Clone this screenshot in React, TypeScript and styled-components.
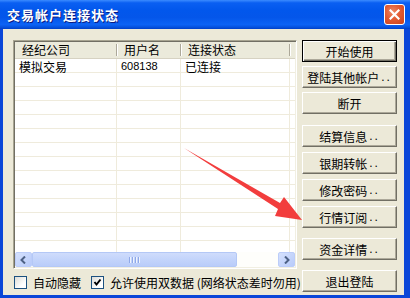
import { FC } from 'react';
import styled, { createGlobalStyle } from 'styled-components';

const GlobalStyle = createGlobalStyle`
  html, body { margin: 0; padding: 0; }
  body {
    width: 410px;
    height: 298px;
    overflow: hidden;
    font-family: "Liberation Sans", "Noto Sans CJK SC", sans-serif;
    font-size: 12px;
    color: #000;
  }
`;

const Window = styled.div`
  position: relative;
  width: 410px;
  height: 298px;
  display: flex;
  flex-direction: column;
  background: #0a46d8;
`;

const TitleBar = styled.div`
  height: 29px;
  flex: none;
  display: flex;
  align-items: center;
  padding: 0 5px 0 7px;
  background: linear-gradient(
    180deg,
    #3b8bff 0%,
    #0a5ff2 10%,
    #0257ec 35%,
    #0456ea 60%,
    #0c63f5 85%,
    #0651dd 94%,
    #0040c8 100%
  );
`;

const Title = styled.div`
  flex: 1;
  color: #fff;
  font-family: "Noto Sans CJK SC", sans-serif;
  font-weight: bold;
  font-size: 13px;
  letter-spacing: 1px;
  text-shadow: 1px 1px 0 #0a1a80;
`;

const CloseButton = styled.div`
  width: 21px;
  height: 21px;
  box-sizing: border-box;
  border: 1px solid #fff;
  border-radius: 3px;
  background: radial-gradient(circle at 40% 35%, #ee8866 0%, #e35b32 45%, #c9401c 100%);
  display: flex;
  align-items: center;
  justify-content: center;
`;

const Body = styled.div`
  flex: 1;
  display: flex;
  background: #ece9d8;
  border-style: solid;
  border-color: #0a46d8;
  border-width: 0 6px 3px 3px;
  padding: 11px 7px 0 10px;
`;

const LeftColumn = styled.div`
  width: 284px;
  display: flex;
  flex-direction: column;
`;

const ListView = styled.div`
  height: 229px;
  box-sizing: border-box;
  border: 1px solid;
  border-color: #a7a491 #fff #fff #a7a491;
  box-shadow: inset 1px 1px 0 #716f64, inset -1px -1px 0 #f1efe2;
  background: #fff;
  padding: 1px;
  display: flex;
  flex-direction: column;
`;

const HeaderRow = styled.div`
  display: flex;
  height: 17px;
  flex: none;
  background: #ebeadb;
  border-bottom: 1px solid #d6d2c2;
  box-sizing: border-box;
  overflow: hidden;
`;

const HeaderCell = styled.div<{ $w: number }>`
  position: relative;
  width: ${p => p.$w}px;
  flex: none;
  box-sizing: border-box;
  padding-left: 7px;
  line-height: 16px;
  font-family: "Noto Sans CJK SC", sans-serif;
  white-space: nowrap;
  &::after {
    content: '';
    position: absolute;
    right: 0;
    top: 2px;
    bottom: 2px;
    width: 1px;
    background: #aca899;
    box-shadow: 1px 0 0 #fff;
  }
`;

const Rows = styled.div`
  flex: 1;
  background-image:
    repeating-linear-gradient(180deg, transparent 0 13px, #efebdc 13px 14px),
    linear-gradient(
      90deg,
      transparent 101px,
      #efebdc 101px 102px,
      transparent 102px 165px,
      #efebdc 165px 166px,
      transparent 166px 274px,
      #efebdc 274px 275px,
      transparent 275px
    );
`;

const Row = styled.div`
  display: flex;
  height: 17px;
`;

const Cell = styled.div<{ $w: number; $latin?: boolean }>`
  width: ${p => p.$w}px;
  flex: none;
  box-sizing: border-box;
  padding-left: 4px;
  line-height: 15px;
  font-family: ${p => (p.$latin ? '"Liberation Sans", sans-serif' : '"Noto Sans CJK SC", sans-serif')};
  font-size: ${p => (p.$latin ? 11 : 12)}px;
  white-space: nowrap;
`;

const HScroll = styled.div`
  height: 15px;
  flex: none;
  display: flex;
  background: #fefefb;
`;

const ScrollArrow = styled.div`
  width: 17px;
  flex: none;
  box-sizing: border-box;
  border: 1px solid #bccdf9;
  border-radius: 2px;
  background: linear-gradient(135deg, #d5e1fd 0%, #b8cbfa 100%);
  display: flex;
  align-items: center;
  justify-content: center;
`;

const ScrollThumb = styled.div`
  width: 205px;
  flex: none;
  box-sizing: border-box;
  border: 1px solid #b4c8f6;
  border-radius: 2px;
  background: linear-gradient(180deg, #cfdcfc 0%, #c3d4fb 50%, #b9ccf9 100%);
  display: flex;
  align-items: center;
  justify-content: center;
  gap: 1px;
`;

const Grip = styled.span`
  width: 1px;
  height: 6px;
  background: #8ea8e8;
  box-shadow: 1px 0 0 #eef3fe;
  margin-right: 1px;
`;

const Track = styled.div`
  flex: 1;
`;

const OptionRow = styled.div`
  display: flex;
  align-items: center;
  height: 21px;
  margin-top: 3px;
  padding-left: 1px;
  font-family: "Noto Sans CJK SC", sans-serif;
  white-space: nowrap;
`;

const Option = styled.label`
  display: flex;
  align-items: center;
  margin-right: 10px;
`;

const CheckBox = styled.span`
  width: 13px;
  height: 13px;
  box-sizing: border-box;
  border: 1px solid #1c5180;
  background: linear-gradient(135deg, #dcdcd7 0%, #fff 70%);
  margin-right: 6px;
  display: flex;
  align-items: center;
  justify-content: center;
`;

const ButtonColumn = styled.div`
  width: 95px;
  margin-left: 5px;
  display: flex;
  flex-direction: column;
`;

const Button = styled.div<{ $gap: number; $default?: boolean }>`
  height: 22px;
  margin-top: ${p => p.$gap}px;
  box-sizing: border-box;
  display: flex;
  align-items: center;
  justify-content: center;
  background: #ece9d8;
  border: 1px solid;
  border-color: ${p => (p.$default ? '#000' : '#fff #716f64 #716f64 #fff')};
  box-shadow: ${p =>
    p.$default
      ? 'inset 1px 1px 0 #fff, inset -1px -1px 0 #716f64, inset -2px -2px 0 #aca899'
      : 'inset -1px -1px 0 #aca899'};
  font-family: "Noto Sans CJK SC", sans-serif;
  font-size: 12px;
  white-space: nowrap;
`;

const Dots = styled.span`
  font-family: "Liberation Sans", sans-serif;
  letter-spacing: 2px;
  margin-left: 2px;
`;

const Arrow = styled.svg`
  position: absolute;
  left: 0;
  top: 0;
  pointer-events: none;
`;

const columns = [
  { title: '经纪公司', w: 102 },
  { title: '用户名', w: 64 },
  { title: '连接状态', w: 109 },
  { title: '', w: 40 },
];

const buttons = [
  { text: '开始使用', gap: 0, def: true },
  { text: '登陆其他帐户', gap: 4, dots: true },
  { text: '断开', gap: 4 },
  { text: '结算信息', gap: 11, dots: true },
  { text: '银期转帐', gap: 5, dots: true },
  { text: '修改密码', gap: 5, dots: true },
  { text: '行情订阅', gap: 5, dots: true },
  { text: '资金详情', gap: 10, dots: true },
  { text: '退出登陆', gap: 10 },
];

const App: FC = () => {
  return (
    <>
      <GlobalStyle />
      <Window>
        <TitleBar>
          <Title>交易帐户连接状态</Title>
          <CloseButton>
            <svg width="11" height="11" viewBox="0 0 11 11">
              <path d="M1.5 1.5 L9.5 9.5 M9.5 1.5 L1.5 9.5" stroke="#fff" strokeWidth="2.2" strokeLinecap="square" />
            </svg>
          </CloseButton>
        </TitleBar>
        <Body>
          <LeftColumn>
            <ListView>
              <HeaderRow>
                {columns.map((c, i) => (
                  <HeaderCell key={i} $w={c.w}>{c.title}</HeaderCell>
                ))}
              </HeaderRow>
              <Rows>
                <Row>
                  <Cell $w={102}>模拟交易</Cell>
                  <Cell $w={64} $latin>608138</Cell>
                  <Cell $w={109}>已连接</Cell>
                </Row>
              </Rows>
              <HScroll>
                <ScrollArrow>
                  <svg width="7" height="8" viewBox="0 0 7 8">
                    <path d="M5 0.5 L1.5 4 L5 7.5" fill="none" stroke="#4d6185" strokeWidth="2" />
                  </svg>
                </ScrollArrow>
                <ScrollThumb>
                  <Grip />
                  <Grip />
                  <Grip />
                  <Grip />
                </ScrollThumb>
                <Track />
                <ScrollArrow>
                  <svg width="7" height="8" viewBox="0 0 7 8">
                    <path d="M2 0.5 L5.5 4 L2 7.5" fill="none" stroke="#4d6185" strokeWidth="2" />
                  </svg>
                </ScrollArrow>
              </HScroll>
            </ListView>
            <OptionRow>
              <Option>
                <CheckBox />
                自动隐藏
              </Option>
              <Option>
                <CheckBox>
                  <svg width="9" height="9" viewBox="0 0 9 9">
                    <path d="M1.5 4 L3.5 6.5 L7.5 1.5" fill="none" stroke="#000" strokeWidth="2" />
                  </svg>
                </CheckBox>
                允许使用双数据 (网络状态差时勿用)
              </Option>
            </OptionRow>
          </LeftColumn>
          <ButtonColumn>
            {buttons.map(b => (
              <Button key={b.text} $gap={b.gap} $default={b.def}>
                {b.text}
                {b.dots && <Dots>..</Dots>}
              </Button>
            ))}
          </ButtonColumn>
        </Body>
        <Arrow width="410" height="298" viewBox="0 0 410 298">
          <polygon
            points="184,148 280,203 284,197 302,220 275,216 278,209"
            fill="#f23d3d"
          />
        </Arrow>
      </Window>
    </>
  );
};

export default App;
